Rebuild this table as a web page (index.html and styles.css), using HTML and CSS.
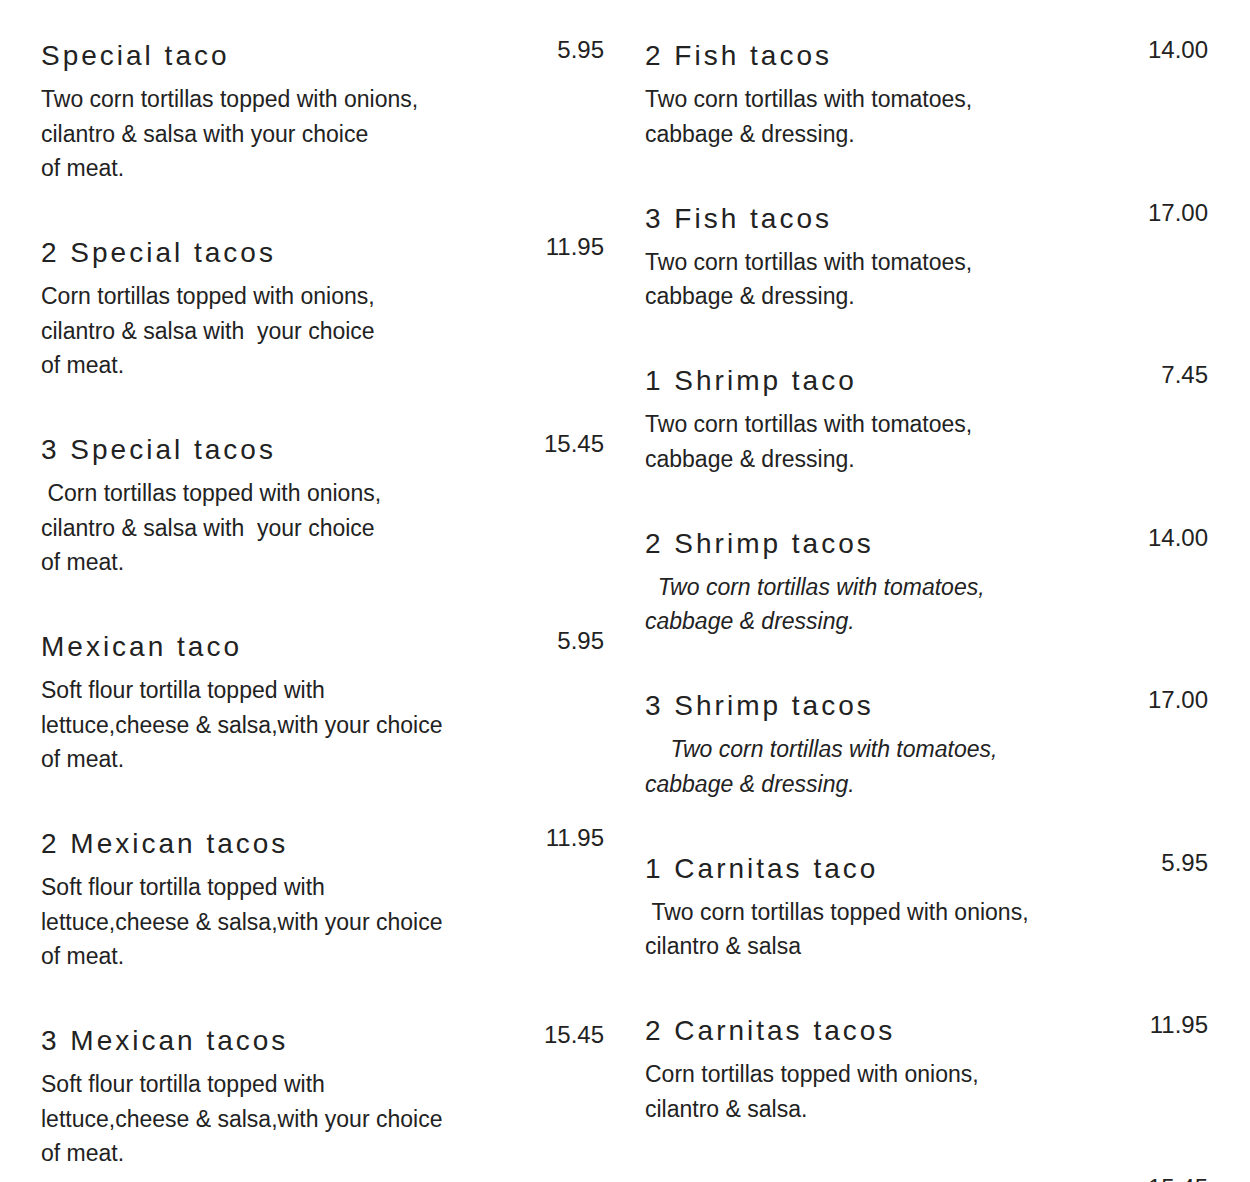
FILE: index.html
```html
<!DOCTYPE html>
<html lang="en">
<head>
<meta charset="utf-8">
<title>Tacos</title>
<link rel="stylesheet" href="styles.css">
</head>
<body>
<main class="menu">
  <h2 class="section-title">Tacos</h2>
  <div class="columns">
    <section class="column">
      <article class="item">
        <div class="item-head"><h3 class="item-name">Special taco</h3><span class="item-price">5.95</span></div>
        <p class="item-desc">Two corn tortillas topped with onions,<br>cilantro &amp; salsa with your choice<br>of meat.</p>
      </article>
      <article class="item">
        <div class="item-head"><h3 class="item-name">2 Special tacos</h3><span class="item-price">11.95</span></div>
        <p class="item-desc">Corn tortillas topped with onions,<br>cilantro &amp; salsa with &nbsp;your choice<br>of meat.</p>
      </article>
      <article class="item">
        <div class="item-head"><h3 class="item-name">3 Special tacos</h3><span class="item-price">15.45</span></div>
        <p class="item-desc">&nbsp;Corn tortillas topped with onions,<br>cilantro &amp; salsa with &nbsp;your choice<br>of meat.</p>
      </article>
      <article class="item">
        <div class="item-head"><h3 class="item-name">Mexican taco</h3><span class="item-price">5.95</span></div>
        <p class="item-desc">Soft flour tortilla topped with<br>lettuce,cheese &amp; salsa,with your choice<br>of meat.</p>
      </article>
      <article class="item">
        <div class="item-head"><h3 class="item-name">2 Mexican tacos</h3><span class="item-price">11.95</span></div>
        <p class="item-desc">Soft flour tortilla topped with<br>lettuce,cheese &amp; salsa,with your choice<br>of meat.</p>
      </article>
      <article class="item">
        <div class="item-head"><h3 class="item-name">3 Mexican tacos</h3><span class="item-price">15.45</span></div>
        <p class="item-desc">Soft flour tortilla topped with<br>lettuce,cheese &amp; salsa,with your choice<br>of meat.</p>
      </article>
    </section>
    <section class="column">
      <article class="item">
        <div class="item-head"><h3 class="item-name">2 Fish tacos</h3><span class="item-price">14.00</span></div>
        <p class="item-desc">Two corn tortillas with tomatoes,<br>cabbage &amp; dressing.</p>
      </article>
      <article class="item">
        <div class="item-head"><h3 class="item-name">3 Fish tacos</h3><span class="item-price">17.00</span></div>
        <p class="item-desc">Two corn tortillas with tomatoes,<br>cabbage &amp; dressing.</p>
      </article>
      <article class="item">
        <div class="item-head"><h3 class="item-name">1 Shrimp taco</h3><span class="item-price">7.45</span></div>
        <p class="item-desc">Two corn tortillas with tomatoes,<br>cabbage &amp; dressing.</p>
      </article>
      <article class="item">
        <div class="item-head"><h3 class="item-name">2 Shrimp tacos</h3><span class="item-price">14.00</span></div>
        <p class="item-desc italic">&nbsp;&nbsp;Two corn tortillas with tomatoes,<br>cabbage &amp; dressing.</p>
      </article>
      <article class="item">
        <div class="item-head"><h3 class="item-name">3 Shrimp tacos</h3><span class="item-price">17.00</span></div>
        <p class="item-desc italic">&nbsp;&nbsp;&nbsp;&nbsp;Two corn tortillas with tomatoes,<br>cabbage &amp; dressing.</p>
      </article>
      <article class="item">
        <div class="item-head"><h3 class="item-name">1 Carnitas taco</h3><span class="item-price">5.95</span></div>
        <p class="item-desc">&nbsp;Two corn tortillas topped with onions,<br>cilantro &amp; salsa</p>
      </article>
      <article class="item">
        <div class="item-head"><h3 class="item-name">2 Carnitas tacos</h3><span class="item-price">11.95</span></div>
        <p class="item-desc">Corn tortillas topped with onions,<br>cilantro &amp; salsa.</p>
      </article>
      <article class="item">
        <div class="item-head"><h3 class="item-name">3 Carnitas tacos</h3><span class="item-price">15.45</span></div>
        <p class="item-desc">Corn tortillas topped with onions,<br>cilantro &amp; salsa.</p>
      </article>
    </section>
  </div>
</main>
</body>
</html>
```
FILE: styles.css
```css
html, body {
  margin: 0;
  padding: 0;
  background: #ffffff;
}

body {
  font-family: "Liberation Sans", Arial, sans-serif;
  color: #222222;
  overflow: hidden;
}

.menu {
  padding: 0 42px 0 41px;
}

.section-title {
  margin: -24px 0 0 10px;
  height: 30px;
  font-size: 24px;
  line-height: 30px;
  font-weight: normal;
  letter-spacing: 3px;
  color: #e4e4e4;
}

.columns {
  display: grid;
  grid-template-columns: 563px 563px;
  column-gap: 41px;
  margin-top: 33px;
}

.column {
  display: flex;
  flex-direction: column;
  gap: 50.5px;
}

.item-head {
  display: flex;
  justify-content: space-between;
  align-items: flex-start;
}

.item-name {
  margin: 0;
  font-size: 28px;
  line-height: 34px;
  font-weight: normal;
  letter-spacing: 3px;
  color: #222222;
}

.item-price {
  font-size: 24px;
  line-height: 22px;
  color: #222222;
}

.item-desc {
  margin: 9px 0 0 0;
  font-size: 23px;
  line-height: 34.5px;
  color: #222222;
}

.item-desc.italic {
  font-style: italic;
}
```
